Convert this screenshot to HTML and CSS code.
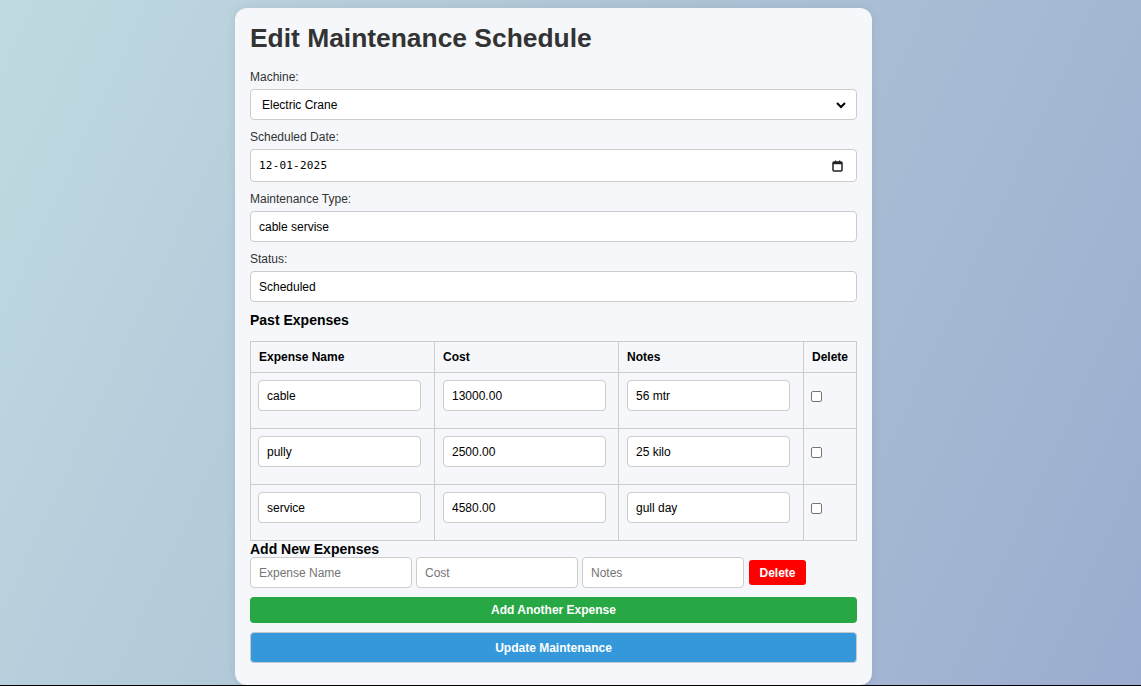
FILE: index.html
```html
<!DOCTYPE html>
<html>
<head>
<meta charset="utf-8">
<link rel="stylesheet" href="styles.css">
</head>
<body>
<div class="card">
  <h1 class="title">Edit Maintenance Schedule</h1>
  <label class="lbl">Machine:</label>
  <div class="field select">Electric Crane
    <svg class="chev" width="10" height="8" viewBox="0 0 10 8"><path d="M1 2 L5 6 L9 2" fill="none" stroke="#000" stroke-width="2"/></svg>
  </div>
  <label class="lbl">Scheduled Date:</label>
  <div class="field date"><span class="mono">12-01-2025</span>
    <svg class="cal" width="11" height="12" viewBox="0 0 11 12"><rect x="1" y="2" width="9" height="9" rx="1" fill="none" stroke="#222" stroke-width="1.5"/><rect x="1" y="2" width="9" height="2.2" fill="#222"/><rect x="3" y="0.5" width="1.2" height="2" fill="#222"/><rect x="7" y="0.5" width="1.2" height="2" fill="#222"/></svg>
  </div>
  <label class="lbl">Maintenance Type:</label>
  <div class="field">cable servise</div>
  <label class="lbl">Status:</label>
  <div class="field">Scheduled</div>
  <h3 class="sub">Past Expenses</h3>
  <table class="tbl">
    <thead>
      <tr><th class="c1">Expense Name</th><th class="c2">Cost</th><th class="c3">Notes</th><th class="c4">Delete</th></tr>
    </thead>
    <tbody>
      <tr><td><div class="cin">cable</div></td><td><div class="cin">13000.00</div></td><td><div class="cin">56 mtr</div></td><td><span class="chk"></span></td></tr>
      <tr><td><div class="cin">pully</div></td><td><div class="cin">2500.00</div></td><td><div class="cin">25 kilo</div></td><td><span class="chk"></span></td></tr>
      <tr><td><div class="cin">service</div></td><td><div class="cin">4580.00</div></td><td><div class="cin">gull day</div></td><td><span class="chk"></span></td></tr>
    </tbody>
  </table>
  <h3 class="sub2">Add New Expenses</h3>
  <div class="newrow">
    <div class="nin ph">Expense Name</div>
    <div class="nin ph">Cost</div>
    <div class="nin ph">Notes</div>
    <div class="btn-del">Delete</div>
  </div>
  <div class="btn-add">Add Another Expense</div>
  <div class="btn-upd">Update Maintenance</div>
</div>
<div class="bottomline"></div>
</body>
</html>
```

FILE: styles.css
```css
html, body { margin: 0; padding: 0; }
body {
  height: 686px;
  overflow: hidden;
  font-family: "Liberation Sans", Arial, sans-serif;
  background: linear-gradient(115deg, #c0dae1 0%, #adc3d6 50%, #9badcf 100%);
  color: #333;
}
.card {
  box-sizing: border-box;
  width: 637px;
  height: 677px;
  margin: 8px 0 0 235px;
  padding: 15px 15px 0 15px;
  background: #f5f7fa;
  border-radius: 12px;
  box-shadow: 0 0 10px rgba(0,0,0,0.08);
}
.title {
  margin: 0 0 16px 0;
  font-size: 26.4px;
  line-height: 31px;
  font-weight: bold;
  color: #333;
}
.lbl {
  display: block;
  font-size: 12px;
  line-height: 14px;
  color: #333;
  margin-bottom: 5px;
}
.field {
  box-sizing: border-box;
  height: 31px;
  border: 1px solid #ccc;
  border-radius: 4px;
  background: #fff;
  font-size: 12px;
  color: #000;
  padding: 0 8px;
  display: flex;
  align-items: center;
  margin-bottom: 10px;
}
.select { padding-left: 11px; justify-content: space-between; }
.chev { margin-right: 2px; }
.date { height: 33px; justify-content: space-between; padding-left: 8px; }
.mono { font-family: "DejaVu Sans Mono", monospace; font-size: 11px; letter-spacing: 0.2px; }
.cal { margin-right: 5px; }
.sub {
  margin: 0 0 13px 0;
  font-size: 14px;
  line-height: 16px;
  font-weight: bold;
  color: #000;
}
.tbl {
  width: 607px;
  border-collapse: collapse;
  table-layout: fixed;
  font-size: 12px;
}
.tbl th, .tbl td {
  border: 1px solid #ccc;
  padding: 8px;
  text-align: left;
  vertical-align: top;
}
.tbl th { height: 12px; font-weight: bold; color: #000; }
.tbl td { padding: 7px 8px 8px 8px; height: 40px; }
.tbl td:first-child { padding-left: 7px; }
.c1 { width: 167px; }
.c2 { width: 167px; }
.c3 { width: 168px; }
.c4 { width: 36px; }
.cin {
  box-sizing: border-box;
  width: 163px;
  height: 31px;
  border: 1px solid #ccc;
  border-radius: 4px;
  background: #fff;
  padding: 0 8px;
  display: flex;
  align-items: center;
  color: #000;
}
.chk {
  display: block;
  width: 11px;
  height: 11px;
  border: 1px solid #767676;
  border-radius: 2px;
  background: #fff;
  margin: 11px 0 0 -1px;
  box-sizing: border-box;
}
.sub2 {
  margin: 0;
  font-size: 14px;
  line-height: 16px;
  font-weight: bold;
  color: #000;
}
.newrow {
  display: flex;
  align-items: center;
  gap: 4px;
  margin-bottom: 9px;
}
.nin {
  box-sizing: border-box;
  width: 162px;
  height: 31px;
  border: 1px solid #ccc;
  border-radius: 4px;
  background: #fff;
  padding: 0 8px;
  display: flex;
  align-items: center;
  font-size: 12px;
}
.ph { color: #757575; }
.btn-del {
  margin-left: 1px;
  width: 57px;
  height: 25px;
  background: #ff0000;
  color: #fff;
  font-weight: bold;
  font-size: 12px;
  border-radius: 3px;
  display: flex;
  align-items: center;
  justify-content: center;
}
.btn-add {
  height: 26px;
  background: #28a745;
  color: #fff;
  font-weight: bold;
  font-size: 12px;
  border-radius: 4px;
  display: flex;
  align-items: center;
  justify-content: center;
  margin-bottom: 9px;
}
.btn-upd {
  box-sizing: border-box;
  height: 31px;
  background: #3498db;
  border: 1px solid #c4c9d0;
  color: #fff;
  font-weight: bold;
  font-size: 12px;
  border-radius: 4px;
  display: flex;
  align-items: center;
  justify-content: center;
}
.bottomline {
  position: fixed;
  left: 0;
  right: 0;
  bottom: 0;
  height: 1px;
  background: #000;
}
```
